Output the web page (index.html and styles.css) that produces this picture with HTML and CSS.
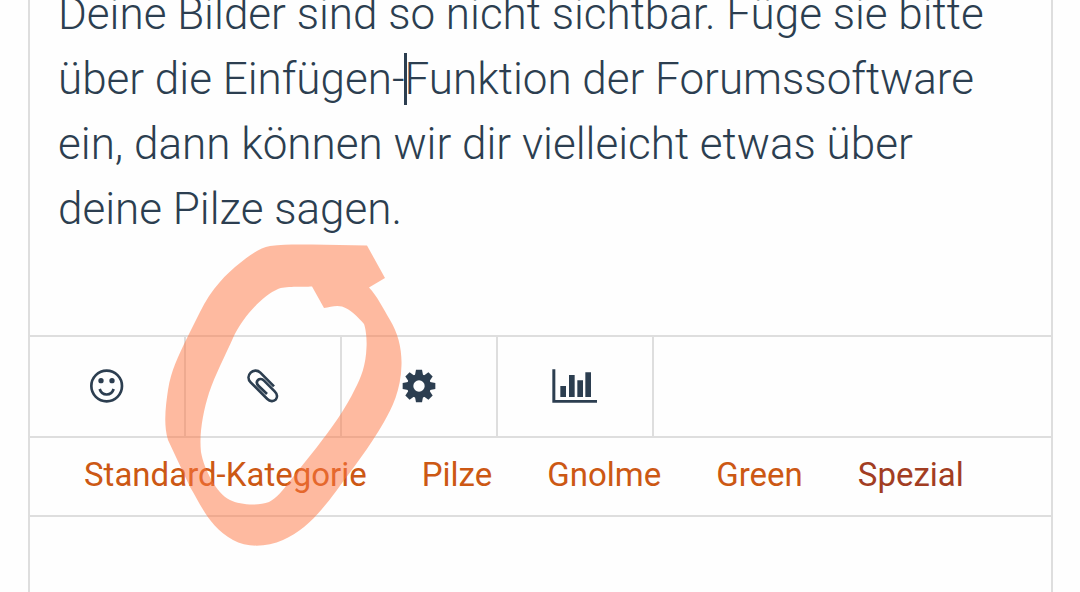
FILE: index.html
```html
<!DOCTYPE html>
<html lang="de">
<head>
    <meta charset="UTF-8">
    <meta name="viewport" content="width=device-width, initial-scale=1.0">
    <title>Antwort schreiben</title>
    <link rel="stylesheet" href="styles.css">
</head>
<body>
    <main class="message">
        <div class="editor">
            <textarea class="editor-text" aria-label="Nachricht" spellcheck="false">Deine Bilder sind so nicht sichtbar. Füge sie bitte über die Einfügen-Funktion der Forumssoftware ein, dann können wir dir vielleicht etwas über deine Pilze sagen.</textarea>
            <span class="caret"></span>
        </div>
        <div class="tabs">
            <button class="tab" type="button" aria-label="Smileys">
                <svg class="icon" viewBox="60 57 102 102">
                    <circle class="line" cx="110" cy="108" r="46"/>
                    <circle cx="93" cy="92" r="8"/>
                    <circle cx="126" cy="92" r="8"/>
                    <path class="line" d="M89 117C96 139 124 139 131 117"/>
                </svg>
            </button>
            <button class="tab" type="button" aria-label="Dateianhänge">
                <svg class="icon" viewBox="48 57 102 102">
                    <path class="line" d="M132 109L91 68C82 59 69 61 62 68C54 76 53 88 62 97L112 147C120 155 131 155 137 149C143 142 142 132 134 124L102 92C96 86 88 86 84 90C79 95 80 102 86 108L111 132"/>
                </svg>
            </button>
            <button class="tab" type="button" aria-label="Einstellungen">
                <svg class="icon" viewBox="-51 -51 102 102">
                    <mask id="hole">
                        <rect x="-51" y="-51" width="102" height="102" fill="#fff"/>
                        <circle r="17" fill="#000"/>
                    </mask>
                    <g mask="url(#hole)">
                        <circle r="36"/>
                        <path id="teeth" d="M-12 -33L-9 -49H9L12 -33V33L9 49H-9L-12 33Z"/>
                        <use href="#teeth" transform="rotate(45)"/>
                        <use href="#teeth" transform="rotate(90)"/>
                        <use href="#teeth" transform="rotate(135)"/>
                    </g>
                </svg>
            </button>
            <button class="tab" type="button" aria-label="Umfrage">
                <svg class="icon wide" viewBox="63 57 144 102">
                    <path d="M67 58H76V150H201V158H67Z"/>
                    <path d="M91 108H108V141H91ZM117 75H134V141H117ZM142 91H159V141H142ZM166 67H183V141H166Z"/>
                </svg>
            </button>
        </div>
        <nav class="categories">
            <a href="#standard">Standard-Kategorie</a>
            <a href="#pilze">Pilze</a>
            <a href="#gnolme">Gnolme</a>
            <a href="#green">Green</a>
            <a class="special" href="#spezial">Spezial</a>
        </nav>
    </main>

    <!-- marker circle around the attachment tab -->
    <svg class="marker" viewBox="160 240 246 310">
        <path fill-rule="evenodd" d="M367 245.500L385 278L369 287.500C377 296 383 308 390 320C398 333 402 349 401.500 365C401 390 392 408 384 422C369 448 353 468 337 490C320 513 304 531 283 540C267 547 247 548 233 540C209 527 200 503 190 487L168 440C163 424 166 404 168 390C171 370 179 355 185 342L200 312C211 289 227 273 240 263C250 255 259 248 270 246C284 244 301 244.500 312 244.500ZM312 286.500L324 308C330 307 336 305 342 306.500C350 309 358 317 364 324C366 329 367 341 366.500 347C366 365 361 378 355 389C346 408 331 429 317 447L289 482C283 490 277 498 269 502C258 506 240 505 230 500C216 493 204 469 201 452C199 434 203 412 209 393C215 375 226 354 233 338C242 318 262 296 278 289C284 286 303 287 312 286.500Z"/>
    </svg>
</body>
</html>
```
FILE: styles.css
```css
* {
    box-sizing: border-box;
}

body {
    margin: 0;
    padding: 0 27px 0 28px;
    font-family: Roboto, sans-serif;
    color: #2c3e50;
    background: #fefefe;
    overflow: hidden;
}

.message {
    display: flow-root;
    min-height: 100vh;
    border: solid #dedede;
    border-width: 0 2px;
}

/* the first line is scrolled a little out of view */
.editor {
    position: relative;
    margin-top: -18px;
}

.editor-text {
    display: block;
    width: 100%;
    height: 353px;
    padding: 0 28px;
    border: none;
    outline: none;
    resize: none;
    overflow: hidden;
    background: none;
    color: inherit;
    font-family: inherit;
    font-size: 44px;
    font-weight: 300;
    line-height: 65px;
}

.caret {
    position: absolute;
    left: 374px;
    top: 71px;
    width: 3px;
    height: 52px;
    background: #2c3e50;
}

.tabs {
    display: flex;
    border: solid #dedede;
    border-width: 2px 0;
}

.tab {
    display: flex;
    justify-content: center;
    align-items: center;
    width: 156px;
    height: 99px;
    padding: 0 0 2px;
    border: none;
    border-right: 2px solid #dedede;
    background: none;
    color: inherit;
    cursor: pointer;
}

.icon {
    width: 34px;
    height: 34px;
    fill: currentColor;
}

.icon.wide {
    width: 48px;
}

.icon .line {
    fill: none;
    stroke: currentColor;
    stroke-width: 8px;
}

.categories {
    display: flex;
    flex-wrap: wrap;
    column-gap: 55px;
    padding: 17px 54px 20px;
    border-bottom: 2px solid #dedede;
    font-size: 33px;
    line-height: 40px;
}

.categories a {
    color: #cc5814;
    text-decoration: none;
}

.categories .special {
    color: #a23d22;
}

.marker {
    position: absolute;
    left: 160px;
    top: 240px;
    width: 246px;
    height: 310px;
    fill: #ff7844;
    opacity: 0.5;
    pointer-events: none;
}
```
